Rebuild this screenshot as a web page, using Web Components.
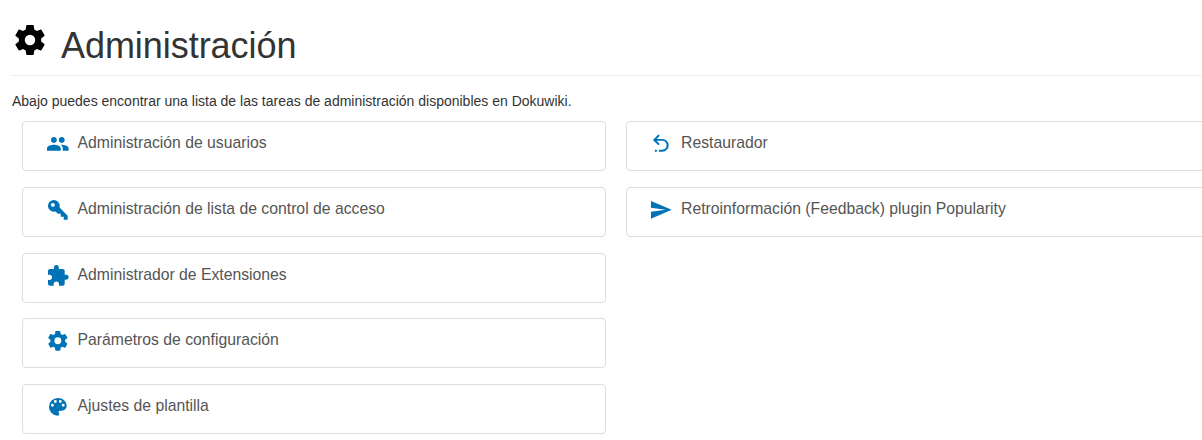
<!DOCTYPE html>
<html lang="es">
<head>
<meta charset="utf-8">
<title>Administración</title>
<style>
html, body { margin: 0; background: #fff; overflow: hidden; }
body { height: 440px; font-family: "Liberation Sans", Arial, sans-serif; font-size: 14px; line-height: 20px; color: #333; }
</style>
</head>
<body>
<admin-page>
  <admin-heading slot="heading">Administración</admin-heading>
  <span slot="intro">Abajo puedes encontrar una lista de las tareas de administración disponibles en Dokuwiki.</span>
  <admin-task slot="core" icon="users">Administración de usuarios</admin-task>
  <admin-task slot="core" icon="key">Administración de lista de control de acceso</admin-task>
  <admin-task slot="core" icon="puzzle">Administrador de Extensiones</admin-task>
  <admin-task slot="core" icon="cog">Parámetros de configuración</admin-task>
  <admin-task slot="core" icon="palette">Ajustes de plantilla</admin-task>
  <admin-task slot="tools" icon="revert">Restaurador</admin-task>
  <admin-task slot="tools" icon="send">Retroinformación (Feedback) plugin Popularity</admin-task>
</admin-page>
<script>
const ICONS = {
  users: 'M16 11c1.66 0 2.99-1.34 2.99-3S17.66 5 16 5s-3 1.34-3 3 1.34 3 3 3zm-8 0c1.66 0 2.99-1.34 2.99-3S9.66 5 8 5 5 6.34 5 8s1.34 3 3 3zm0 2c-2.33 0-7 1.17-7 3.5V19h14v-2.5c0-2.33-4.67-3.5-7-3.5zm8 0c-.29 0-.62.02-.97.05 1.16.84 1.97 1.97 1.97 3.45V19h6v-2.5c0-2.33-4.67-3.5-7-3.5z',
  key: 'M22 18v4h-4v-3h-3v-3h-3l-2.26-2.26c-.55.17-1.13.26-1.74.26a6 6 0 0 1-6-6 6 6 0 0 1 6-6 6 6 0 0 1 6 6c0 .61-.09 1.19-.26 1.74L22 18M7 5a2 2 0 0 0-2 2 2 2 0 0 0 2 2 2 2 0 0 0 2-2 2 2 0 0 0-2-2z',
  puzzle: 'M20.5 11H19V7c0-1.11-.9-2-2-2h-4V3.5a2.5 2.5 0 0 0-5 0V5H4a2 2 0 0 0-2 2v3.8h1.5c1.5 0 2.7 1.2 2.7 2.7S5 16.2 3.5 16.2H2V20a2 2 0 0 0 2 2h3.8v-1.5c0-1.5 1.2-2.7 2.7-2.7s2.7 1.2 2.7 2.7V22H17a2 2 0 0 0 2-2v-4h1.5a2.5 2.5 0 0 0 0-5z',
  cog: 'M12 15.5A3.5 3.5 0 0 1 8.5 12 3.5 3.5 0 0 1 12 8.5a3.5 3.5 0 0 1 3.5 3.5 3.5 3.5 0 0 1-3.5 3.5m7.43-2.53c.04-.32.07-.64.07-.97 0-.33-.03-.66-.07-1l2.11-1.63c.19-.15.24-.42.12-.64l-2-3.46c-.12-.22-.39-.31-.61-.22l-2.49 1c-.52-.39-1.06-.73-1.69-.98l-.37-2.65A.506.506 0 0 0 14 2h-4c-.25 0-.46.18-.5.42l-.37 2.65c-.63.25-1.17.59-1.69.98l-2.49-1c-.22-.09-.49 0-.61.22l-2 3.46c-.13.22-.07.49.12.64L4.57 11c-.04.34-.07.67-.07 1 0 .33.03.65.07.97l-2.11 1.66c-.19.15-.25.42-.12.64l2 3.46c.12.22.39.3.61.22l2.49-1.01c.52.4 1.06.74 1.69.99l.37 2.65c.04.24.25.42.5.42h4c.25 0 .46-.18.5-.42l.37-2.65c.63-.26 1.17-.59 1.69-.99l2.49 1.01c.22.08.49 0 .61-.22l2-3.46c.12-.22.07-.49-.12-.64l-2.11-1.66z',
  palette: 'M17.5 12a1.5 1.5 0 0 1 0-3 1.5 1.5 0 0 1 0 3m-3-4a1.5 1.5 0 0 1 0-3 1.5 1.5 0 0 1 0 3m-5 0a1.5 1.5 0 0 1 0-3 1.5 1.5 0 0 1 0 3m-3 4a1.5 1.5 0 0 1 0-3 1.5 1.5 0 0 1 0 3M12 3a9 9 0 0 0-9 9 9 9 0 0 0 9 9 1.5 1.5 0 0 0 1.5-1.5c0-.39-.15-.74-.39-1-.23-.27-.38-.62-.38-1a1.5 1.5 0 0 1 1.5-1.5H16a5 5 0 0 0 5-5c0-4.42-4.03-8-9-8z',
  revert: 'M13.5 7a6.5 6.5 0 0 1 6.5 6.5 6.5 6.5 0 0 1-6.5 6.5H10v-2h3.5c2.5 0 4.5-2 4.5-4.5S16 9 13.5 9H7.83l3.08 3.09L9.5 13.5 4 8l5.5-5.5 1.42 1.41L7.83 7h5.67M6 18h2v2H6v-2z',
  send: 'M2 21l21-9L2 3v7l15 2-15 2v7z'
};

class AdminIcon extends HTMLElement {
  connectedCallback() {
    const root = this.attachShadow({ mode: 'open' });
    root.innerHTML = `<style>
      :host { display: block; flex: none; width: 23.625px; height: 23.625px; }
      svg { display: block; width: 100%; height: 100%; fill: currentColor; }
    </style><svg viewBox="0 0 24 24" aria-hidden="true"><path fill-rule="evenodd" d="${ICONS[this.getAttribute('name')]}"/></svg>`;
  }
}

class AdminHeading extends HTMLElement {
  connectedCallback() {
    this.attachShadow({ mode: 'open' }).innerHTML = `<style>
      :host { display: flex; align-items: flex-start; gap: 13px; height: 53px; border-bottom: 1px solid #eee; }
      admin-icon { width: 36px; height: 36px; color: #000; }
      h1 { margin: 4px 0 0; font-size: 36px; line-height: 40px; font-weight: 400; letter-spacing: -0.05px; white-space: nowrap; }
    </style><admin-icon name="cog"></admin-icon><h1><slot></slot></h1>`;
  }
}

class AdminTask extends HTMLElement {
  connectedCallback() {
    this.attachShadow({ mode: 'open' }).innerHTML = `<style>
      :host { display: flex; align-items: flex-start; gap: 8px; box-sizing: border-box; height: 50px;
        padding: 10px 0 0 22.9px; border: 1px solid #ddd; border-radius: 4px; }
      admin-icon { color: #0073b7; }
      span { font-size: 15.75px; line-height: 22px; color: #555; white-space: nowrap; }
    </style><admin-icon name="${this.getAttribute('icon')}"></admin-icon><span><slot></slot></span>`;
  }
}

class AdminPage extends HTMLElement {
  connectedCallback() {
    this.attachShadow({ mode: 'open' }).innerHTML = `<style>
      :host { display: block; padding: 22px 0 0 12px; }
      p { margin: 15px 0 10px; }
      .columns { display: grid; grid-template-columns: 584px 584px; column-gap: 19.53px; padding-left: 10px; align-items: start; }
      .column { display: flex; flex-direction: column; gap: 15.8px; }
    </style>
    <slot name="heading"></slot>
    <p><slot name="intro"></slot></p>
    <div class="columns">
      <div class="column"><slot name="core"></slot></div>
      <div class="column"><slot name="tools"></slot></div>
    </div>`;
  }
}

customElements.define('admin-icon', AdminIcon);
customElements.define('admin-heading', AdminHeading);
customElements.define('admin-task', AdminTask);
customElements.define('admin-page', AdminPage);
</script>
</body>
</html>
